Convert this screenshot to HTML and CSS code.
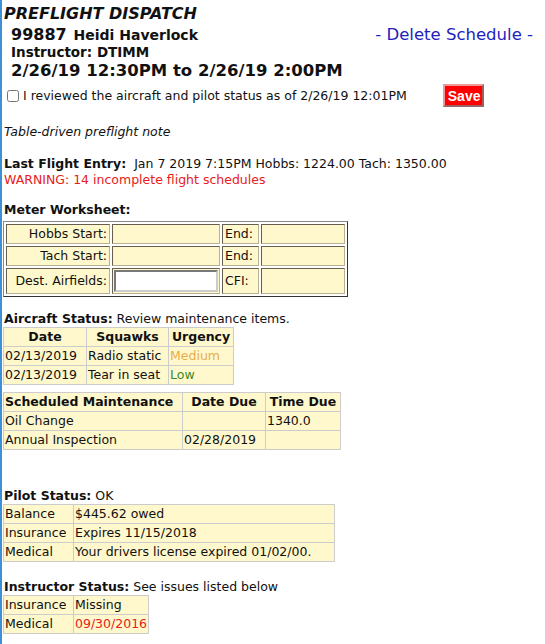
FILE: index.html
```html
<!DOCTYPE html>
<html lang="en">
<head>
    <meta charset="UTF-8">
    <title>Preflight Dispatch</title>
    <link rel="stylesheet" href="styles.css">
</head>
<body>
    <h1 class="page-title">PREFLIGHT DISPATCH</h1>

    <div class="schedule-head">
        <div class="who">
            <div class="pilot"><span class="tail">99887</span> Heidi Haverlock</div>
            <div class="instructor">Instructor: DTIMM</div>
        </div>
        <a class="delete-link" href="#">- Delete Schedule -</a>
    </div>
    <div class="when">2/26/19 12:30PM to 2/26/19 2:00PM</div>

    <div class="review-row">
        <label><input type="checkbox"> I reviewed the aircraft and pilot status as of 2/26/19 12:01PM</label>
        <button class="save-btn">Save</button>
    </div>

    <p class="note">Table-driven preflight note</p>

    <div class="last-flight"><b>Last Flight Entry:</b>&nbsp; Jan 7 2019 7:15PM Hobbs: 1224.00 Tach: 1350.00</div>
    <div class="warning">WARNING: 14 incomplete flight schedules</div>

    <!-- Meter worksheet -->
    <div class="section-title meter-title"><b>Meter Worksheet:</b></div>
    <table class="meter">
        <tr>
            <td class="lbl">Hobbs Start:</td>
            <td class="val"></td>
            <td class="lbl2">End:</td>
            <td class="val2"></td>
        </tr>
        <tr>
            <td class="lbl">Tach Start:</td>
            <td class="val"></td>
            <td class="lbl2">End:</td>
            <td class="val2"></td>
        </tr>
        <tr class="tall">
            <td class="lbl">Dest. Airfields:</td>
            <td class="val"><input type="text" class="airfields"></td>
            <td class="lbl2">CFI:</td>
            <td class="val2"></td>
        </tr>
    </table>

    <!-- Aircraft status -->
    <div class="section-title status-title"><b>Aircraft Status:</b> Review maintenance items.</div>
    <table class="grid squawks">
        <tr><th>Date</th><th>Squawks</th><th>Urgency</th></tr>
        <tr><td>02/13/2019</td><td>Radio static</td><td class="medium">Medium</td></tr>
        <tr><td>02/13/2019</td><td>Tear in seat</td><td class="low">Low</td></tr>
    </table>

    <table class="grid maint">
        <tr><th class="left">Scheduled Maintenance</th><th>Date Due</th><th>Time Due</th></tr>
        <tr><td>Oil Change</td><td></td><td>1340.0</td></tr>
        <tr><td>Annual Inspection</td><td>02/28/2019</td><td></td></tr>
    </table>

    <!-- Pilot status -->
    <div class="section-title pilot-title"><b>Pilot Status:</b> OK</div>
    <table class="grid people pilot-table">
        <tr><td class="key">Balance</td><td>$445.62 owed</td></tr>
        <tr><td class="key">Insurance</td><td>Expires 11/15/2018</td></tr>
        <tr><td class="key">Medical</td><td>Your drivers license expired 01/02/00.</td></tr>
    </table>

    <!-- Instructor status -->
    <div class="section-title instr-title"><b>Instructor Status:</b> See issues listed below</div>
    <table class="grid people">
        <tr><td class="key">Insurance</td><td>Missing</td></tr>
        <tr><td class="key">Medical</td><td class="expired">09/30/2016</td></tr>
    </table>
</body>
</html>
```

FILE: styles.css
```css
body {
    font-family: "DejaVu Sans", Verdana, sans-serif;
    font-size: 12.5px;
    color: #111;
    background-color: #fff;
    margin: 0;
    padding: 4px 0 0 1px;
    border-left: 2px solid #3d8fd6;
    min-height: 644px;
    box-sizing: border-box;
}
.page-title {
    font-size: 16px;
    font-style: italic;
    font-weight: bold;
    margin: 0 0 0 1px;
    line-height: 19px;
}
.schedule-head {
    display: flex;
    justify-content: space-between;
    align-items: flex-start;
    width: 530px;
    padding-left: 8px;
    margin-top: 3px;
    box-sizing: border-box;
}
.pilot {
    font-weight: bold;
    font-size: 14px;
    line-height: 18px;
}
.tail {
    font-size: 16px;
    margin-right: 2px;
}
.instructor {
    font-weight: bold;
    font-size: 13.5px;
    line-height: 16px;
}
.delete-link {
    color: #2222bb;
    text-decoration: none;
    font-size: 16.5px;
    line-height: 18px;
}
.when {
    font-weight: bold;
    font-size: 16.5px;
    line-height: 21px;
    padding-left: 8px;
}
.review-row {
    display: flex;
    align-items: center;
    margin-top: 3px;
    padding-left: 3px;
}
.review-row label {
    display: flex;
    align-items: center;
}
.review-row input {
    margin: 0 4px 0 1px;
    width: 12px;
    height: 12px;
}
.save-btn {
    margin-left: 36px;
    background-color: #f00;
    color: #fff;
    font-family: "Liberation Sans", Arial, sans-serif;
    font-weight: bold;
    font-size: 14px;
    border: 2px outset #e99;
    padding: 0 3px;
    width: 41px;
    height: 23px;
}
.note {
    font-style: italic;
    margin: 17px 0 0 1px;
    line-height: 16px;
}
.last-flight,
.warning {
    line-height: 16px;
    margin-left: 1px;
}
.last-flight {
    margin-top: 16px;
}
.warning {
    color: #e82020;
}
.section-title {
    line-height: 16px;
    margin-left: 1px;
}
.meter-title {
    margin-top: 14px;
}
.meter {
    margin-top: 3px;
    border: 1px outset #888;
    border-spacing: 2px;
    background-color: #fff;
    line-height: 16px;
}
.meter td {
    border: 1px inset #b8b090;
    background-color: #fff8cc;
    padding: 1px 2px;
}
.meter .lbl {
    width: 98px;
    text-align: right;
}
.meter .val {
    width: 100px;
}
.meter .lbl2 {
    width: 31px;
}
.meter .val2 {
    width: 78px;
}
.meter .tall .val {
    padding: 1px;
}
.airfields {
    display: block;
    width: 104px;
    height: 22px;
    box-sizing: border-box;
    border: 2px inset #ccc;
    font: inherit;
    margin: 0;
    padding: 0 2px;
}
.grid {
    border-collapse: collapse;
    background-color: #fff8cc;
    line-height: 16px;
}
.grid th,
.grid td {
    border: 1px solid #ccc;
    padding: 1px;
}
.grid th {
    text-align: center;
}
.grid th.left {
    text-align: left;
}
.status-title {
    margin-top: 14px;
}
.squawks th:nth-child(1) {
    width: 80px;
}
.squawks th:nth-child(2) {
    width: 79px;
}
.squawks th:nth-child(3) {
    width: 62px;
}
.maint {
    margin-top: 7px;
}
.maint th:first-child {
    width: 176px;
}
.maint th:nth-child(2) {
    width: 80px;
}
.maint th:nth-child(3) {
    width: 72px;
}
.medium {
    color: #e8ae4a;
}
.low {
    color: #3a8a2a;
}
.pilot-title {
    margin-top: 38px;
}
.instr-title {
    margin-top: 17px;
}
.people .key {
    width: 67px;
}
.pilot-table td:last-child {
    width: 258px;
}
.expired {
    color: #e82020;
}
```
